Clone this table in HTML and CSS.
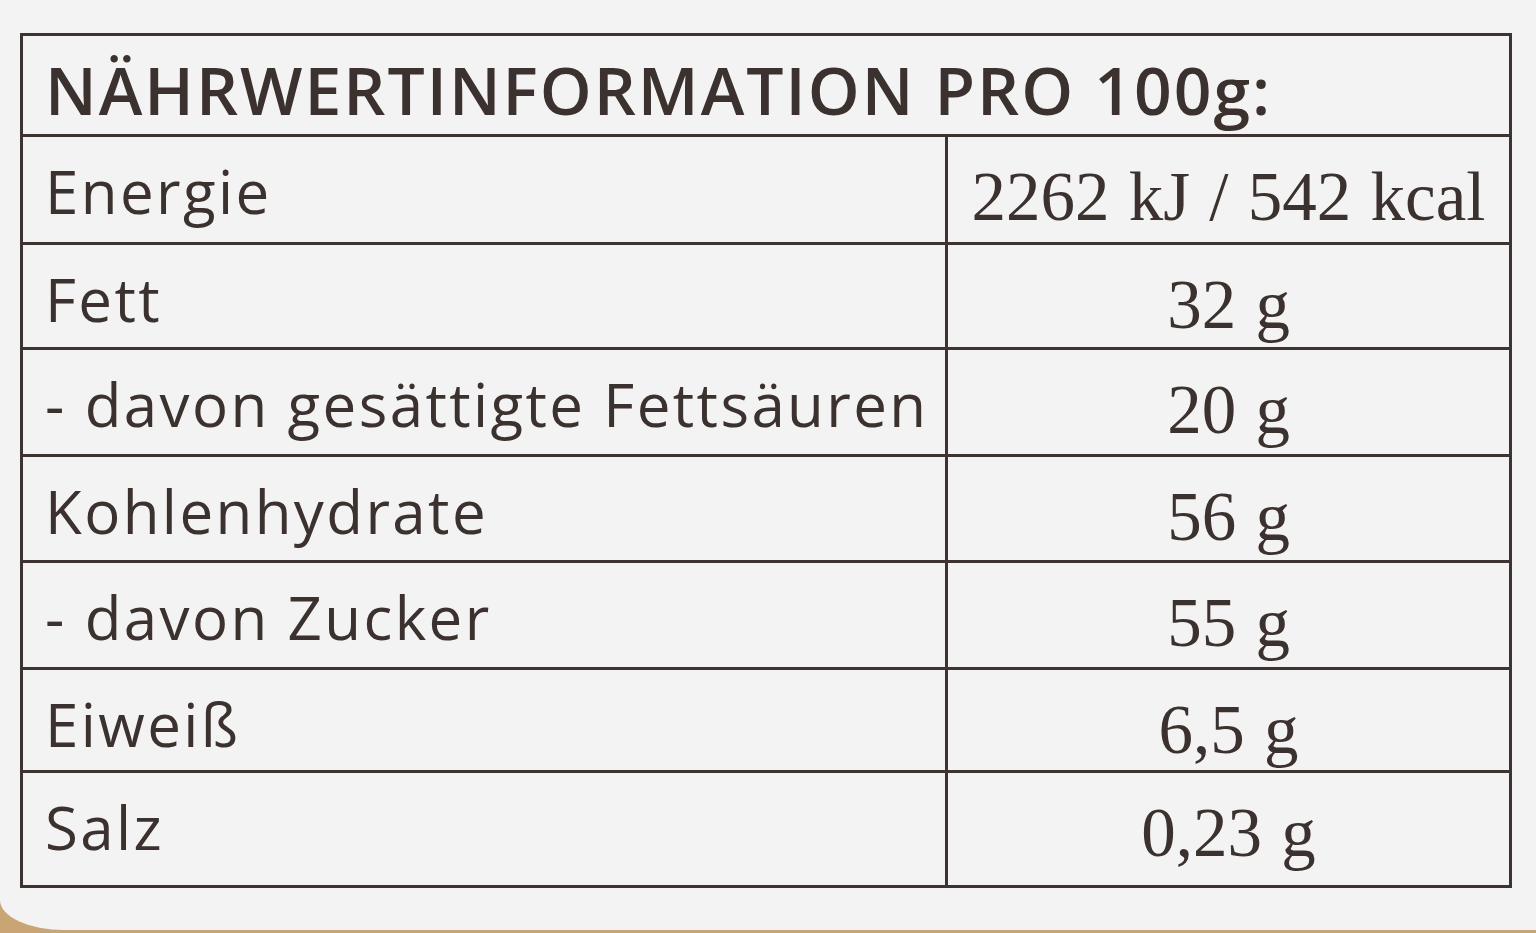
FILE: index.html
```html
<!DOCTYPE html>
<html lang="de">
<head>
<meta charset="utf-8">
<title>Nährwertinformation</title>
<link rel="stylesheet" href="styles.css">
</head>
<body>
<div class="paper">
  <div class="label">
    <div class="head">NÄHRWERTINFORMATION PRO 100g:</div>
    <div class="row r1"><div class="name">Energie</div><div class="val">2262 kJ / 542 kcal</div></div>
    <div class="row r2"><div class="name">Fett</div><div class="val">32 g</div></div>
    <div class="row r3"><div class="name">- davon gesättigte Fettsäuren</div><div class="val">20 g</div></div>
    <div class="row r4"><div class="name">Kohlenhydrate</div><div class="val">56 g</div></div>
    <div class="row r5"><div class="name">- davon Zucker</div><div class="val">55 g</div></div>
    <div class="row r6"><div class="name">Eiweiß</div><div class="val">6,5 g</div></div>
    <div class="row r7"><div class="name">Salz</div><div class="val">0,23 g</div></div>
  </div>
</div>
</body>
</html>
```
FILE: styles.css
```css
html, body {
  margin: 0;
  padding: 0;
}
body {
  width: 1536px;
  height: 933px;
  background: #c9a575;
  overflow: hidden;
}
.paper {
  width: 1536px;
  height: 930px;
  background: #f3f3f3;
  border-bottom-left-radius: 64px 30px;
  padding-top: 33px;
  box-sizing: border-box;
  color: #3b312e;
}
.label {
  margin-left: 20px;
  width: 1492px;
  border: 3px solid #3d3330;
  box-sizing: border-box;
}
.head {
  height: 101px;
  border-bottom: 3px solid #3d3330;
  font-family: "Open Sans", sans-serif;
  font-weight: 600;
  font-size: 66px;
  line-height: 1;
  padding: 20px 0 0 22px;
  box-sizing: border-box;
  white-space: nowrap;
  letter-spacing: 2px;
}
.row {
  display: grid;
  grid-template-columns: 925px 1fr;
  height: 108px;
  border-bottom: 3px solid #3d3330;
  box-sizing: border-box;
}
.row.r7 {
  border-bottom: none;
  height: 112px;
}
.r2 { height: 105px; }
.r3 { height: 107px; }
.r4 { height: 106px; }
.r5 { height: 107px; }
.r6 { height: 103px; }
.name {
  border-right: 3px solid #3d3330;
  font-family: "Open Sans", sans-serif;
  font-size: 60px;
  line-height: 1;
  padding: 24px 0 0 22px;
  white-space: nowrap;
  letter-spacing: 2.4px;
}
.val {
  font-family: "Liberation Serif", serif;
  font-size: 69px;
  line-height: 1;
  text-align: center;
  padding-top: 26px;
  white-space: nowrap;
  word-spacing: 2px;
}
```
